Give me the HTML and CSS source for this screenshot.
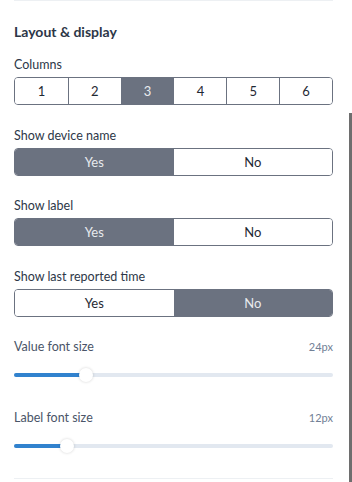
FILE: index.html
```html
<!DOCTYPE html>
<html lang="en">
<head>
    <meta charset="UTF-8">
    <meta name="viewport" content="width=device-width, initial-scale=1.0">
    <title>Layout &amp; display</title>
    <link rel="stylesheet" href="styles.css">
</head>
<body>
    <div class="panel">
        <div class="divider"></div>
        <h3 class="section-title">Layout &amp; display</h3>

        <div class="field first">
            <div class="label">Columns</div>
            <div class="segments six">
                <button>1</button>
                <button>2</button>
                <button class="active">3</button>
                <button>4</button>
                <button>5</button>
                <button>6</button>
            </div>
        </div>

        <div class="field">
            <div class="label">Show device name</div>
            <div class="segments two">
                <button class="active">Yes</button>
                <button>No</button>
            </div>
        </div>

        <div class="field">
            <div class="label">Show label</div>
            <div class="segments two">
                <button class="active">Yes</button>
                <button>No</button>
            </div>
        </div>

        <div class="field">
            <div class="label">Show last reported time</div>
            <div class="segments two">
                <button>Yes</button>
                <button class="active">No</button>
            </div>
        </div>

        <div class="field slider-field">
            <div class="slider-head">
                <span class="slider-label">Value font size</span>
                <span class="slider-value">24px</span>
            </div>
            <div class="slider">
                <div class="track">
                    <div class="fill" style="width: 22.6%"></div>
                    <div class="thumb" style="left: 22.6%"></div>
                </div>
            </div>
        </div>

        <div class="field slider-field second">
            <div class="slider-head">
                <span class="slider-label">Label font size</span>
                <span class="slider-value">12px</span>
            </div>
            <div class="slider">
                <div class="track">
                    <div class="fill" style="width: 16.6%"></div>
                    <div class="thumb" style="left: 16.6%"></div>
                </div>
            </div>
        </div>

        <div class="divider bottom"></div>
    </div>
    <div class="scroll-thumb"></div>
</body>
</html>
```

FILE: styles.css
```css
body {
    margin: 0;
    font-family: Lato, "Open Sans", sans-serif;
    background-color: #ffffff;
    color: #2d3748;
    overflow: hidden;
}
.panel {
    width: 319px;
    margin-left: 14px;
}
.divider {
    height: 1px;
    background-color: #edf0f3;
}
.divider.bottom {
    margin-top: 25px;
}
.section-title {
    margin: 23px 0 0 0;
    font-size: 14px;
    line-height: 16px;
    font-weight: 700;
    color: #2d3748;
}
.field {
    margin-top: 21.5px;
}
.field.first {
    margin-top: 16px;
}
.label {
    font-size: 12.5px;
    line-height: 16px;
    padding-top: 1px;
    color: #2d3748;
    margin-bottom: 4px;
}
.segments {
    display: grid;
    height: 28px;
    box-sizing: border-box;
    border: 1px solid #6b7280;
    border-radius: 4px;
    overflow: hidden;
}
.segments.six {
    grid-template-columns: repeat(6, 1fr);
}
.segments.two {
    grid-template-columns: repeat(2, 1fr);
}
.segments button {
    margin: 0;
    padding: 0;
    border: none;
    background-color: #ffffff;
    font-family: inherit;
    font-size: 13px;
    color: #1f2933;
    cursor: pointer;
}
.segments.six button + button {
    border-left: 1px solid #6b7280;
}
.segments button.active {
    background-color: #6b7280;
    color: #e8eaee;
}
.slider-head {
    display: flex;
    justify-content: space-between;
    align-items: baseline;
    line-height: 16px;
    padding-top: 1px;
}
.slider-label {
    font-size: 12.5px;
    color: #4a5568;
}
.slider-value {
    font-size: 11px;
    color: #718096;
}
.slider {
    margin-top: 13px;
    height: 14px;
    display: flex;
    align-items: center;
}
.slider-field.second {
    margin-top: 27px;
}
.track {
    position: relative;
    width: 100%;
    height: 4px;
    border-radius: 2px;
    background-color: #e2e8f0;
}
.fill {
    height: 4px;
    border-radius: 2px;
    background-color: #3182ce;
}
.thumb {
    position: absolute;
    top: -5px;
    width: 14px;
    height: 14px;
    margin-left: -7px;
    border-radius: 50%;
    background-color: #ffffff;
    box-shadow: 0 0 3px rgba(0, 0, 0, 0.18);
}
.scroll-thumb {
    position: fixed;
    right: 0;
    top: 113px;
    width: 3px;
    bottom: 0;
    background-color: #6e6e6e;
}
```
